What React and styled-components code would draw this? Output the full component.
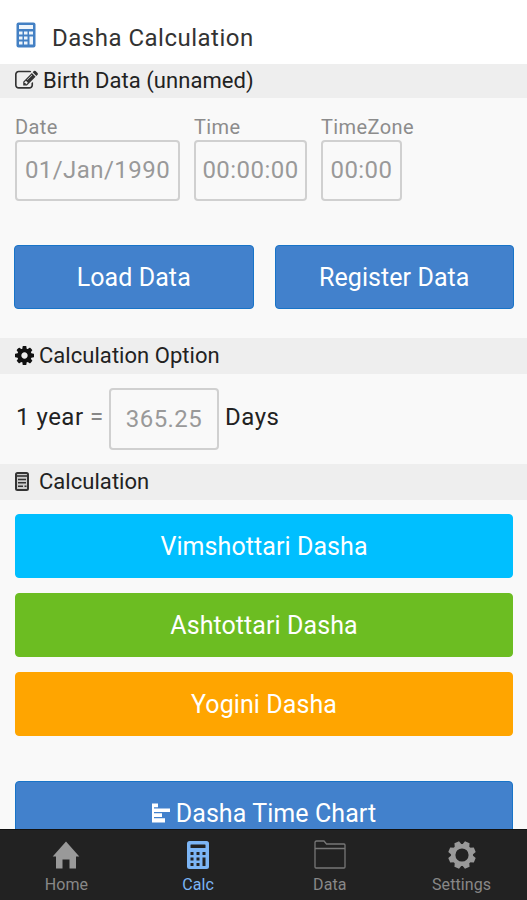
import styled, { createGlobalStyle } from 'styled-components';

const GlobalStyle = createGlobalStyle`
    * {
        box-sizing: border-box;
    }

    body {
        margin: 0;
        background: #f9f9f9;
        font-family: Roboto, "Liberation Sans", sans-serif;
        overflow: hidden;
    }
`;

const Screen = styled.div`
    display: flex;
    flex-direction: column;
    height: 900px;
    overflow: hidden;
`;

const Header = styled.header`
    display: flex;
    flex: none;
    align-items: center;
    gap: 16px;
    height: 64px;
    padding: 6px 16px 0;
    background: #fff;
`;

const Title = styled.h1`
    margin: 0;
    padding-top: 5px;
    color: #333;
    font-size: 24px;
    font-weight: 400;
    line-height: 28px;
    letter-spacing: 0.5px;
    white-space: nowrap;
`;

const Content = styled.main`
    flex: 1;
    min-height: 0;
    overflow: hidden;
`;

const SectionBar = styled.h2`
    display: flex;
    align-items: center;
    gap: ${(props) => props.$gap}px;
    height: ${(props) => props.$height || 36}px;
    margin: 0;
    padding: 0 0 2px 15px;
    background: #eee;
    color: #222;
    font-size: 22px;
    font-weight: 400;
    letter-spacing: 0.04px;
    white-space: nowrap;
`;

const FieldRow = styled.div`
    display: flex;
    gap: 14px;
    padding: 17px 15px 0;
`;

const Field = styled.label`
    display: flex;
    flex-direction: column;
    width: ${(props) => props.$width}px;
    color: #8c8c8c;
    font-size: 20px;
    line-height: 25px;
    letter-spacing: 0.4px;
    white-space: nowrap;
`;

const ValueBox = styled.span`
    display: flex;
    flex: none;
    align-items: center;
    justify-content: center;
    width: ${(props) => props.$width}px;
    height: ${(props) => props.$height || 61}px;
    border: 2px solid #d0d0d0;
    border-radius: 4px;
    color: #999;
    font-size: 24px;
    letter-spacing: 0.45px;
`;

const Button = styled.button`
    display: flex;
    flex: none;
    align-items: center;
    justify-content: center;
    gap: 6px;
    height: 64px;
    padding: 0;
    border: 1px solid ${(props) => props.$edge || props.$color};
    border-radius: 4px;
    background: ${(props) => props.$color};
    color: #fff;
    font-family: inherit;
    font-size: 25px;
    letter-spacing: 0.08px;
`;

const ButtonRow = styled.div`
    display: grid;
    grid-template-columns: 1fr 1fr;
    gap: 21px;
    padding: 44px 13px 29px 14px;
`;

const YearRow = styled.div`
    display: flex;
    height: 90px;
    padding: 14px 16px 0;
    color: #222;
    font-size: 24px;
    line-height: 58px;
    letter-spacing: 0.5px;
    white-space: nowrap;
`;

const YearLabel = styled.span`
    width: 93px;
`;

const Equals = styled.span`
    color: #888;
`;

const DaysLabel = styled.span`
    padding-left: 6px;
`;

const ButtonStack = styled.div`
    display: flex;
    flex-direction: column;
    gap: 15px;
    padding: 14px 14px 0 15px;
`;

const ChartButton = styled(Button)`
    margin-top: 30px;
`;

const TabBar = styled.nav`
    display: grid;
    flex: none;
    grid-template-columns: repeat(4, 1fr);
    height: 71px;
    border-top: 1px solid #111;
    background: #222;
`;

const Tab = styled.a`
    display: flex;
    flex-direction: column;
    align-items: center;
    gap: 4px;
    padding: 9px 0 0 1px;
    color: ${(props) => (props.$active ? '#7cb5f5' : '#888')};
    font-size: 16px;
    line-height: 20px;
    letter-spacing: 0.1px;

    svg {
        height: 32px;
    }
`;

const BLUE = '#4281cc';
const BLUE_EDGE = '#1874c8';

function HeaderCalculator() {
    return (
        <svg width="20" height="26" viewBox="0 0 20 26">
            <rect x="0.5" y="0.5" width="19" height="25" rx="2" fill="#4380c4" />
            <g fill="#eef5fc">
                <rect x="3" y="3" width="14" height="4" />
                <path d="M3 9.5h3.5v3H3zM8 9.5h3.5v3H8zM13 9.5h4v3h-4zM3 14.5h3.5v3H3zM8 14.5h3.5v3H8zM3 19.5h3.5v3H3zM8 19.5h3.5v3H8zM13.5 14.5H17v8h-3.5z" />
            </g>
        </svg>
    );
}

function CalculatorIcon() {
    return (
        <svg width="22" viewBox="0 0 22 28">
            <rect width="22" height="28" rx="2.5" fill="currentColor" />
            <g fill="#222">
                <rect x="3.5" y="3.5" width="15" height="3.5" rx="0.5" />
                <rect x="3.5" y="11" width="3" height="3" />
                <rect x="9.5" y="11" width="3" height="3" />
                <rect x="15.5" y="11" width="3" height="3" />
                <rect x="3.5" y="16.5" width="3" height="3" />
                <rect x="9.5" y="16.5" width="3" height="3" />
                <rect x="3.5" y="22" width="3" height="3" />
                <rect x="9.5" y="22" width="3" height="3" />
                <rect x="15.5" y="16.5" width="3" height="8.5" />
            </g>
        </svg>
    );
}

function EditIcon() {
    return (
        <svg width="23" height="23" viewBox="0 0 1792 1792" fill="#333">
            <path d="M888 1184l116-116-152-152-116 116v56h96v96h56zm440-720q-16-16-33 1l-350 350q-17 17-1 33t33-1l350-350q17-17 1-33zm80 594v190q0 119-84.5 203.5t-203.5 84.5h-832q-119 0-203.5-84.5t-84.5-203.5v-832q0-119 84.5-203.5t203.5-84.5h832q63 0 117 25 15 7 18 23 3 17-9 29l-49 49q-14 14-32 8-23-6-45-6h-832q-66 0-113 47t-47 113v832q0 66 47 113t113 47h832q66 0 113-47t47-113v-126q0-13 9-22l64-64q15-15 35-7t20 29zm-96-738l288 288-672 672h-288v-288zm444 132l-92 92-288-288 92-92q28-28 68-28t68 28l152 152q28 28 28 68t-28 68z" />
        </svg>
    );
}

function CogIcon() {
    return (
        <svg width="19" height="19" viewBox="128 128 1536 1536" fill="#111">
            <path d="M1152 896q0-106-75-181t-181-75-181 75-75 181 75 181 181 75 181-75 75-181zm512-109v222q0 12-8 23t-20 13l-185 28q-19 54-39 91 35 50 107 138 10 12 10 25t-9 23q-27 37-99 108t-94 71q-12 0-26-9l-138-108q-44 23-91 38-16 136-29 186-7 28-36 28h-222q-14 0-24.5-8.5t-11.5-21.5l-28-184q-49-16-90-37l-141 107q-10 9-25 9-14 0-25-11-126-114-165-168-7-10-7-23 0-12 8-23 15-21 51-66.5t54-70.5q-27-50-41-99l-183-27q-13-2-21-12.5t-8-23.5v-222q0-12 8-23t19-13l186-28q14-46 39-92-40-57-107-138-10-12-10-24 0-10 9-23 26-36 98.5-107.5t94.5-71.5q13 0 26 10l138 107q44-23 91-38 16-136 29-186 7-28 36-28h222q14 0 24.5 8.5t11.5 21.5l28 184q49 16 90 37l142-107q9-9 24-9 13 0 25 10 129 119 165 170 7 8 7 22 0 12-8 23-15 21-51 66.5t-54 70.5q26 50 41 98l183 28q13 2 21 12.5t8 23.5z" />
        </svg>
    );
}

function SheetIcon() {
    return (
        <svg width="14" height="19" viewBox="0 0 14 19" fill="none" stroke="#333">
            <rect x="1" y="1" width="12" height="17" rx="1.5" fill="#ccc" strokeWidth="2" />
            <path d="M1 4h12" strokeWidth="1.6" />
            <path d="M3 7.5h8M3 10.8h8M3 14.2h5M9.5 14.2h2" strokeWidth="1.4" />
        </svg>
    );
}

function BarsIcon() {
    return (
        <svg width="18" height="20" viewBox="0 0 18 20" fill="#fff">
            <path d="M0 0.5h6v3.7H0zM0 5.6h18v3.4H0zM0 10.2h10v3.8H0zM0 15.2h13v4.3H0zM0 0.5h2v19H0z" />
        </svg>
    );
}

function HomeIcon() {
    return (
        <svg width="28" viewBox="0 0 28 32" fill="#999">
            <path d="M14 2.5L27.3 17.5H24V29.5H17.5V20.5H10.5V29.5H4V17.5H0.7z" />
        </svg>
    );
}

function FolderIcon() {
    return (
        <svg width="32" viewBox="0 0 32 32" fill="none" stroke="#777" strokeWidth="1.3">
            <path d="M1 28V3.5Q1 2 2.5 2H10L12.5 5H30Q31 5 31 6V28Q31 29 30 29H2Q1 29 1 28zM1 9.5H31" />
        </svg>
    );
}

function GearIcon() {
    return (
        <svg width="28" viewBox="-14 -16 28 32">
            <circle r="8.8" fill="none" stroke="#999" strokeWidth="4.4" />
            <g fill="#999">
                {[0, 45, 90, 135, 180, 225, 270, 315].map((angle) => (
                    <path key={angle} transform={`rotate(${angle + 22.5})`} d="M-3.8 -9.5L-2.5 -13.8H2.5L3.8 -9.5z" />
                ))}
            </g>
        </svg>
    );
}

function App() {
    return (
        <>
            <GlobalStyle />
            <Screen>
                <Header>
                    <HeaderCalculator />
                    <Title>Dasha Calculation</Title>
                </Header>
                <Content>
                    <SectionBar $gap={5} $height={34}>
                        <EditIcon />
                        Birth Data (unnamed)
                    </SectionBar>
                    <FieldRow>
                        <Field $width={165}>
                            Date
                            <ValueBox $width={165}>01/Jan/1990</ValueBox>
                        </Field>
                        <Field $width={113}>
                            Time
                            <ValueBox $width={113}>00:00:00</ValueBox>
                        </Field>
                        <Field $width={81}>
                            TimeZone
                            <ValueBox $width={81}>00:00</ValueBox>
                        </Field>
                    </FieldRow>
                    <ButtonRow>
                        <Button $color={BLUE} $edge={BLUE_EDGE}>Load Data</Button>
                        <Button $color={BLUE} $edge={BLUE_EDGE}>Register Data</Button>
                    </ButtonRow>
                    <SectionBar $gap={5}>
                        <CogIcon />
                        Calculation Option
                    </SectionBar>
                    <YearRow>
                        <YearLabel>1 year <Equals>=</Equals></YearLabel>
                        <ValueBox $width={110} $height={62}>365.25</ValueBox>
                        <DaysLabel>Days</DaysLabel>
                    </YearRow>
                    <SectionBar $gap={10}>
                        <SheetIcon />
                        Calculation
                    </SectionBar>
                    <ButtonStack>
                        <Button $color="#00bfff">Vimshottari Dasha</Button>
                        <Button $color="#6cbd22">Ashtottari Dasha</Button>
                        <Button $color="#ffa500">Yogini Dasha</Button>
                        <ChartButton $color={BLUE} $edge={BLUE_EDGE}>
                            <BarsIcon />
                            Dasha Time Chart
                        </ChartButton>
                    </ButtonStack>
                </Content>
                <TabBar>
                    <Tab>
                        <HomeIcon />
                        Home
                    </Tab>
                    <Tab $active>
                        <CalculatorIcon />
                        Calc
                    </Tab>
                    <Tab>
                        <FolderIcon />
                        Data
                    </Tab>
                    <Tab>
                        <GearIcon />
                        Settings
                    </Tab>
                </TabBar>
            </Screen>
        </>
    );
}

export default App;
